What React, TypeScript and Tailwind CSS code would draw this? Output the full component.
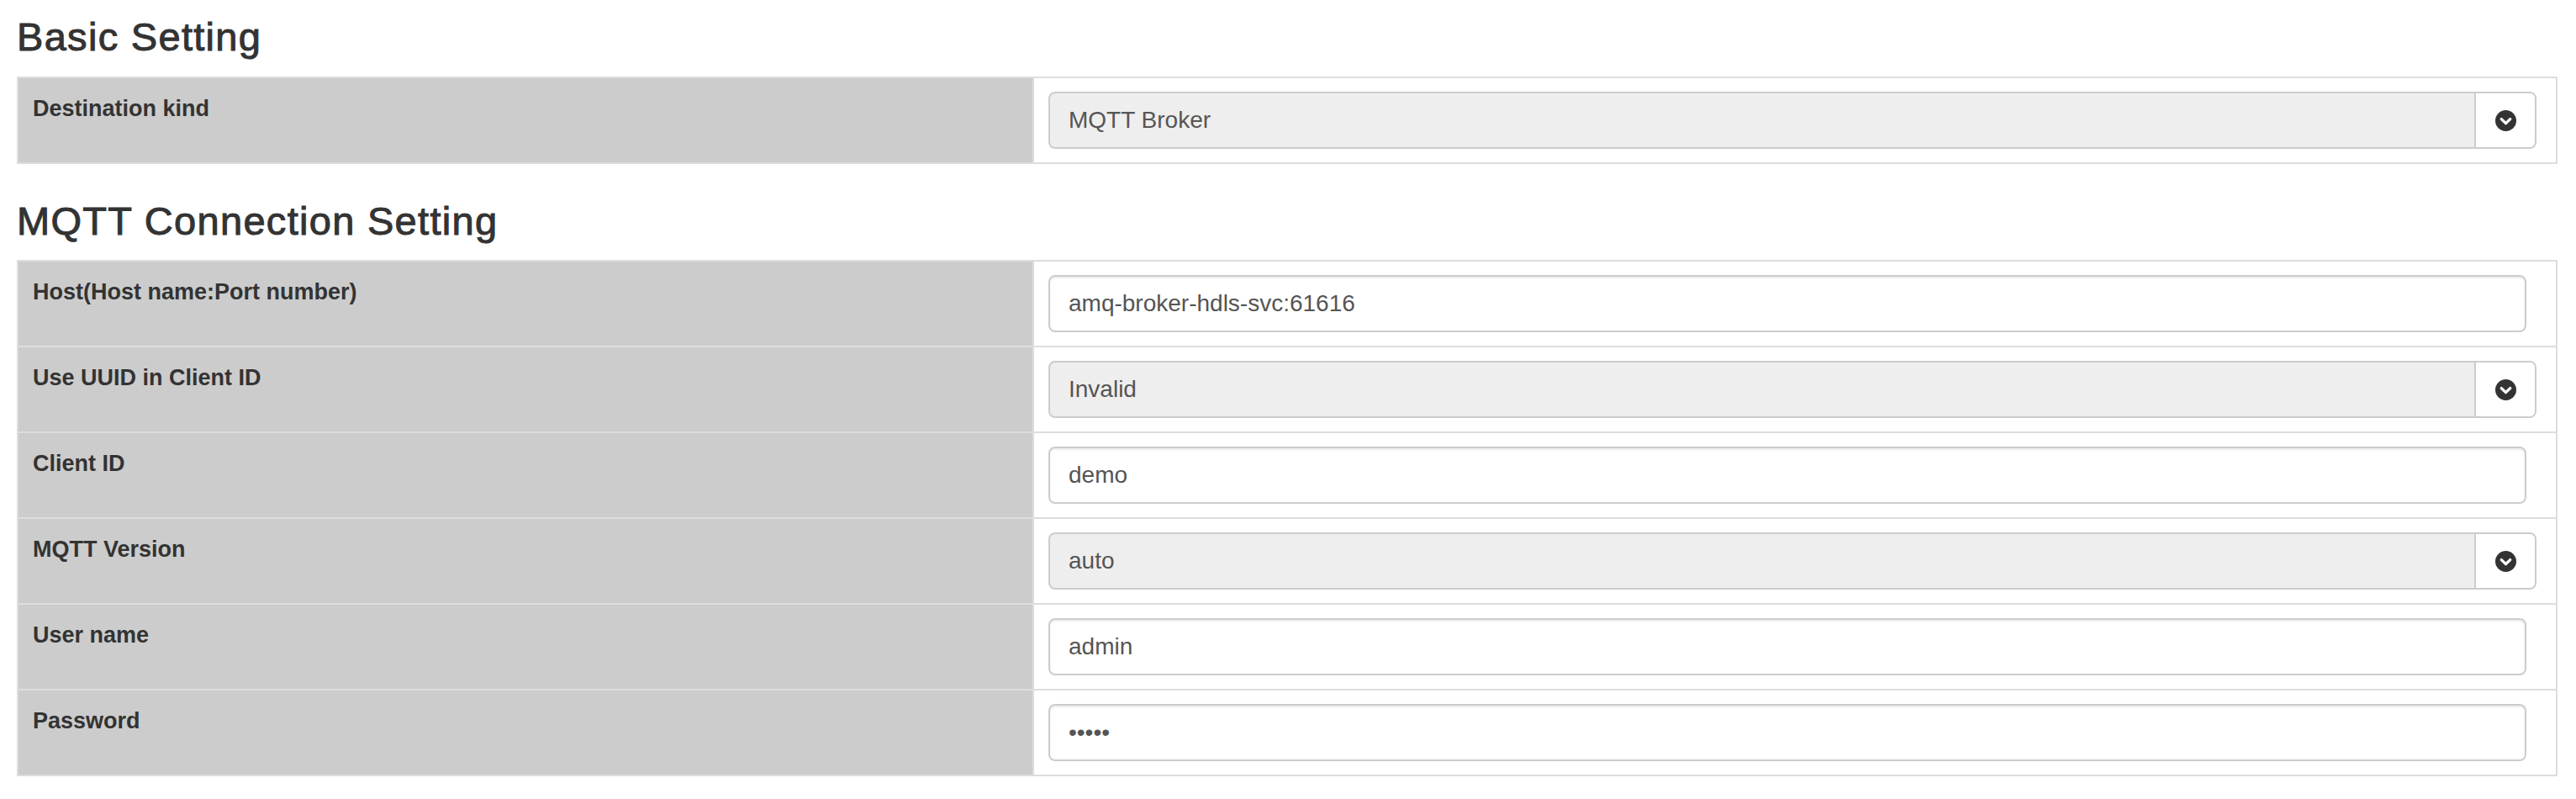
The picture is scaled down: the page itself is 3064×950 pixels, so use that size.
import React from 'react';

type Field =
  | { label: string; kind: 'input'; value: string }
  | { label: string; kind: 'password'; value: string }
  | { label: string; kind: 'select'; value: string };

const BASIC: Field[] = [{ label: 'Destination kind', kind: 'select', value: 'MQTT Broker' }];

const MQTT: Field[] = [
  { label: 'Host(Host name:Port number)', kind: 'input', value: 'amq-broker-hdls-svc:61616' },
  { label: 'Use UUID in Client ID', kind: 'select', value: 'Invalid' },
  { label: 'Client ID', kind: 'input', value: 'demo' },
  { label: 'MQTT Version', kind: 'select', value: 'auto' },
  { label: 'User name', kind: 'input', value: 'admin' },
  { label: 'Password', kind: 'password', value: 'admin' },
];

const ChevronCircle: React.FC = () => (
  <svg width="25" height="25" viewBox="0 0 24 24">
    <circle cx="12" cy="12" r="12" fill="#333" />
    <path d="M7 10.2 L12 15 L17 10.2" fill="none" stroke="#fff" strokeWidth="3.2" strokeLinecap="round" strokeLinejoin="round" />
  </svg>
);

const SelectBox: React.FC<{ value: string }> = ({ value }) => (
  <div className="flex h-[68px] overflow-hidden rounded-[8px] border-2 border-[#ccc] bg-[#eee]">
    <div className="flex flex-1 items-center pl-[22px] text-[28px] text-[#555]">{value}</div>
    <div className="flex w-[72px] items-center justify-center border-l-2 border-[#ccc] bg-white">
      <ChevronCircle />
    </div>
  </div>
);

const TextBox: React.FC<{ value: string; password?: boolean }> = ({ value, password }) => (
  <input
    type={password ? 'password' : 'text'}
    readOnly
    defaultValue={value}
    className="mr-[12px] block h-[68px] w-[calc(100%-12px)] rounded-[8px] border-2 border-[#ccc] bg-white pl-[22px] text-[28px] text-[#555] shadow-[inset_0_2px_2px_rgba(0,0,0,0.075)] outline-none"
  />
);

const SettingTable: React.FC<{ rows: Field[] }> = ({ rows }) => (
  <div className="border-2 border-[#ddd]">
    {rows.map((row, i) => (
      <div key={row.label} className={`flex ${i > 0 ? 'border-t-2 border-[#ddd]' : ''}`}>
        <div className="w-[1208px] shrink-0 border-r-2 border-[#ddd] bg-[#ccc] px-[17px] pt-[17px] text-[27px] leading-[38px] font-bold text-[#333]">
          {row.label}
        </div>
        <div className="flex-1 py-[16px] pl-[17px] pr-[23px]">
          {row.kind === 'select' ? (
            <SelectBox value={row.value} />
          ) : (
            <TextBox value={row.value} password={row.kind === 'password'} />
          )}
        </div>
      </div>
    ))}
  </div>
);

const App: React.FC = () => {
  return (
    <div className="min-h-screen bg-white pl-[20px] pr-[22px] pt-[18px] font-['Liberation_Sans',Arial,sans-serif] text-[#333]">
      {/* Basic */}
      <h3 className="mb-[21px] text-[47px] leading-[52px] tracking-[1.3px] [-webkit-text-stroke:1px_#333]">
        Basic Setting
      </h3>
      <SettingTable rows={BASIC} />

      {/* MQTT connection */}
      <h3 className="mb-[20px] mt-[42px] text-[47px] leading-[52px] tracking-[1.3px] [-webkit-text-stroke:1px_#333]">
        MQTT Connection Setting
      </h3>
      <SettingTable rows={MQTT} />
    </div>
  );
};

export default App;
